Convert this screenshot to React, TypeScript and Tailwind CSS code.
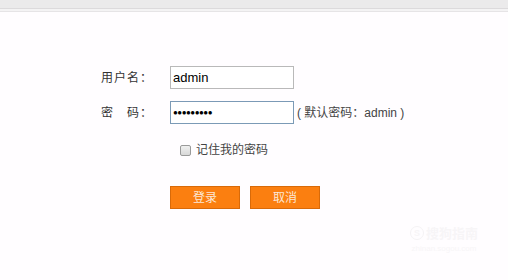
export default function App() {
  return (
    <div
      className="relative h-[280px] w-[508px] overflow-hidden bg-[#fffdff] text-[#333]"
      style={{ fontFamily: '"Liberation Sans", "Noto Sans CJK SC", sans-serif' }}
    >
      <div className="h-[8px] bg-[#ebeaeb]" />
      <div className="h-[1px] bg-[#dcdadc]" />
      <div className="h-[3px] border-b border-[#e6e4e6] bg-[#f4f3f4]" />

      <div className="flex flex-col pl-[101px] pt-[54px] text-[12px]">
        <div className="flex h-[23px] items-center">
          <span className="w-[69px] tracking-[1px]">用户名：</span>
          <input
            readOnly
            value="admin"
            className="h-[23px] w-[124px] border border-[#b9b9b9] bg-white px-[2px] text-[13px] text-black outline-none"
          />
        </div>

        <div className="mt-[12px] flex h-[23px] items-center">
          <span className="w-[69px] whitespace-pre tracking-[1px]">密　码：</span>
          <div className="flex h-[23px] w-[124px] items-center border border-[#7b9ab6] bg-white pl-[2px] text-[8px] leading-none tracking-[-0.5px] text-black">
            ●●●●●●●●●
          </div>
          <span className="ml-[3px] text-[12px] text-[#444]">( 默认密码：admin )</span>
        </div>

        <div className="mt-[17px] flex items-center pl-[79px]">
          <span className="h-[11px] w-[11px] rounded-[2px] border border-[#9a9a9a] bg-gradient-to-b from-[#f0f0f0] to-[#d8d8d8]" />
          <span className="ml-[5px] text-[12px] text-[#444]">记住我的密码</span>
        </div>

        <div className="mt-[27px] flex gap-[10px] pl-[69px]">
          <button className="h-[23px] w-[70px] border border-[#d96a08] bg-[#fb7f10] text-[12px] text-[#fbe8d6]">
            登录
          </button>
          <button className="h-[23px] w-[70px] border border-[#d96a08] bg-[#fb7f10] text-[12px] text-[#fbe8d6]">
            取消
          </button>
        </div>
      </div>

      <div className="absolute bottom-[25px] right-[30px] flex flex-col items-center text-[#f7f5f7]">
        <div className="flex items-center gap-[2px]">
          <span className="flex h-[14px] w-[14px] items-center justify-center rounded-full border border-[#f5f3f5] text-[9px] font-bold">
            S
          </span>
          <span className="text-[13px] font-bold">搜狗指南</span>
        </div>
        <span className="text-[8px]">zhinan.sogou.com</span>
      </div>
    </div>
  );
}
